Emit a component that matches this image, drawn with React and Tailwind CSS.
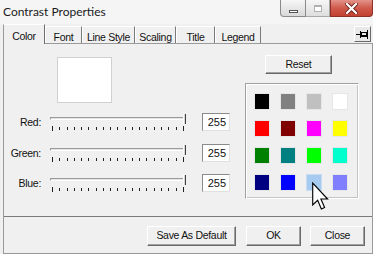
import React from 'react';

const swatches = [
  '#000000', '#808080', '#c0c0c0', '#ffffff',
  '#ff0000', '#800000', '#ff00ff', '#ffff00',
  '#008000', '#008080', '#00ff00', '#00ffcc',
  '#000080', '#0000ff', '#a6caf0', '#8080ff',
];

const tabs = [
  { label: 'Font', cls: 'w-[37px]' },
  { label: 'Line Style', cls: 'w-[53px]' },
  { label: 'Scaling', cls: 'w-[41px]' },
  { label: 'Title', cls: 'w-[39px]' },
  { label: 'Legend', cls: 'w-[46px]' },
];

const rows = [
  { label: 'Red:', cls: 'mt-[10px]' },
  { label: 'Green:', cls: 'mt-[13px]' },
  { label: 'Blue:', cls: 'mt-[12px]' },
];

const ticks = Array.from({ length: 19 });

const Slider = () => (
  <div className="relative ml-[9px] w-[136px] h-[18px] flex flex-col">
    <div className="mt-[4px] h-[3px] border-t border-t-[#9a9a9a] border-b border-b-white bg-[#e4e4e4] border-l border-l-[#9a9a9a]" />
    <div className="mt-[6px] px-[2px] flex justify-between items-start">
      {ticks.map((_, i) => (
        <div
          key={i}
          className={i === 0 || i === 18 ? 'w-px h-[5px] bg-[#222]' : 'w-px h-[3px] mt-[1px] bg-[#222]'}
        />
      ))}
    </div>
    {/* thumb */}
    <div className="absolute right-0 top-[1px] w-[3px] h-[10px] border-l border-l-white border-r border-r-[#404040] bg-[#d8d8d8]" />
  </div>
);

const Button = ({ children, cls }) => (
  <div
    className={`${cls} flex items-center justify-center bg-[#f0f0f0] border border-t-white border-l-white border-r-[#6a6a6a] border-b-[#6a6a6a] shadow-[inset_-1px_-1px_0_#a0a0a0,0_0_0_0_#000] text-[#111]`}
  >
    {children}
  </div>
);

export default function App() {
  return (
    <div className="relative w-[378px] h-[256px] bg-white overflow-hidden font-['Liberation_Sans',Arial,sans-serif] text-[10.5px] tracking-[-0.3px] text-[#111]">
      <div className="w-[373px] h-[254px] bg-[#f0f0f0] flex flex-col">
        {/* title bar */}
        <div className="h-[24px] flex items-start bg-[#f5f5f5]">
          <div className="pl-[3px] pt-[3px] font-['Lato',sans-serif] text-[12px] tracking-normal text-[#1a1a1a]">
            Contrast Properties
          </div>
          <div className="ml-auto flex h-[17px]">
            <div className="w-[26px] h-full flex items-end justify-center pb-[3px] rounded-bl-[4px] border border-t-0 border-[#8a8a8a] bg-gradient-to-b from-[#f6f6f6] to-[#d9d9d9]">
              <div className="w-[9px] h-[3px] border border-[#555] bg-white" />
            </div>
            <div className="w-[24px] h-full flex items-center justify-center border-b border-r border-[#a8a8a8] bg-gradient-to-b from-[#f6f6f6] to-[#dedede]">
              <div className="w-[8px] h-[7px] border border-[#b0b0b0] border-t-2 bg-white" />
            </div>
            <div className="w-[43px] h-full flex items-center justify-center rounded-br-[4px] border border-t-0 border-[#8d3027] bg-gradient-to-b from-[#e3938a] via-[#cf5a4c] to-[#c2402f]">
              <svg width="13" height="11" viewBox="0 0 13 11">
                <path d="M2 1 L11 10 M11 1 L2 10" stroke="#6b1f18" strokeWidth="4" strokeLinecap="square" />
                <path d="M2 1 L11 10 M11 1 L2 10" stroke="#ffffff" strokeWidth="2.2" strokeLinecap="square" />
              </svg>
            </div>
          </div>
        </div>

        {/* tab strip */}
        <div className="ml-[3px] w-[370px] h-[19px] flex items-end">
          <div className="relative z-10 -mb-px w-[42px] h-[20px] flex justify-center pt-[4px] bg-[#f0f0f0] border-l border-l-[#9a9a9a] border-t border-t-white border-r border-r-[#6f6f6f]">
            Color
          </div>
          {tabs.map((t) => (
            <div
              key={t.label}
              className={`${t.cls} h-[17px] flex justify-center pt-[3px] border-t border-t-white border-l border-l-white border-r border-r-[#7a7a7a]`}
            >
              {t.label}
            </div>
          ))}
          <div className="ml-auto mr-[2px] mb-px w-[17px] h-[16px] flex items-center justify-center border border-t-white border-l-white border-r-[#6a6a6a] border-b-[#6a6a6a] bg-[#e8e8e8]">
            <svg width="13" height="9" viewBox="0 0 13 9">
              <path d="M0 4.5 H4" stroke="#000" strokeWidth="1" />
              <path d="M4.5 1 V8" stroke="#000" strokeWidth="1" />
              <rect x="5.5" y="2.5" width="5" height="4" fill="none" stroke="#000" strokeWidth="1" />
              <path d="M6 5.5 H10" stroke="#000" strokeWidth="1" />
              <path d="M11.5 0 V9" stroke="#000" strokeWidth="1" />
            </svg>
          </div>
        </div>

        {/* frame */}
        <div className="ml-[3px] w-[370px] flex-1 flex flex-col border-l border-r border-b border-[#9a9a9a]">
          {/* panel */}
          <div className="h-[174px] flex border-t border-t-[#9a9a9a] border-b border-b-[#7a7a7a]">
            {/* left column */}
            <div className="w-[226px] flex flex-col">
              <div className="ml-[53px] mt-[13px] w-[55px] h-[46px] bg-white border border-[#d0d0d0]" />
              {rows.map((r) => (
                <div key={r.label} className={`${r.cls} h-[18px] flex items-start`}>
                  <div className="w-[37px] text-right pt-[2px]">{r.label}</div>
                  <Slider />
                  <div className="ml-[16px] w-[28px] h-[18px] bg-white border border-t-[#8a8a8a] border-l-[#8a8a8a] border-r-[#e0e0e0] border-b-[#e0e0e0] text-right pr-[3px] leading-[16px] text-[11px] tracking-normal">
                    255
                  </div>
                </div>
              ))}
            </div>

            {/* right column */}
            <div className="ml-[15px] flex flex-col">
              <Button cls="ml-[20px] mt-[11px] w-[67px] h-[19px]">Reset</Button>
              <div className="mt-[9px] w-[114px] h-[116px] border border-t-[#a0a0a0] border-l-[#a0a0a0] border-r-white border-b-white shadow-[inset_1px_1px_0_#ffffff,inset_-1px_-1px_0_#c4c4c4] pl-[8px] pt-[9px]">
                <div className="grid grid-cols-[16px_16px_16px_16px] gap-x-[10px] gap-y-[10px]">
                  {swatches.map((c, i) => (
                    <div
                      key={i}
                      className={i === 14 ? 'w-[16px] h-[17px] border border-[#c8dcf2]' : 'w-[16px] h-[17px] border border-[#e6e6e6]'}
                      style={{ backgroundColor: c }}
                    />
                  ))}
                </div>
              </div>
            </div>
          </div>

          {/* bottom buttons */}
          <div className="flex-1 flex justify-end items-start pt-[9px] pr-[7px]">
            <Button cls="w-[89px] h-[20px]">Save As Default</Button>
            <Button cls="ml-[10px] w-[55px] h-[20px]">OK</Button>
            <Button cls="ml-[9px] w-[55px] h-[20px]">Close</Button>
          </div>
        </div>
      </div>

      {/* mouse cursor */}
      <svg className="absolute left-[312px] top-[182px]" width="17" height="29" viewBox="0 0 12 20">
        <path
          d="M0.5 0.5 L0.5 16 L4 12.7 L6.6 18.8 L8.9 17.8 L6.3 11.8 L11 11.8 Z"
          fill="#ffffff"
          stroke="#000000"
          strokeWidth="0.8"
          strokeLinejoin="miter"
        />
      </svg>
    </div>
  );
}
